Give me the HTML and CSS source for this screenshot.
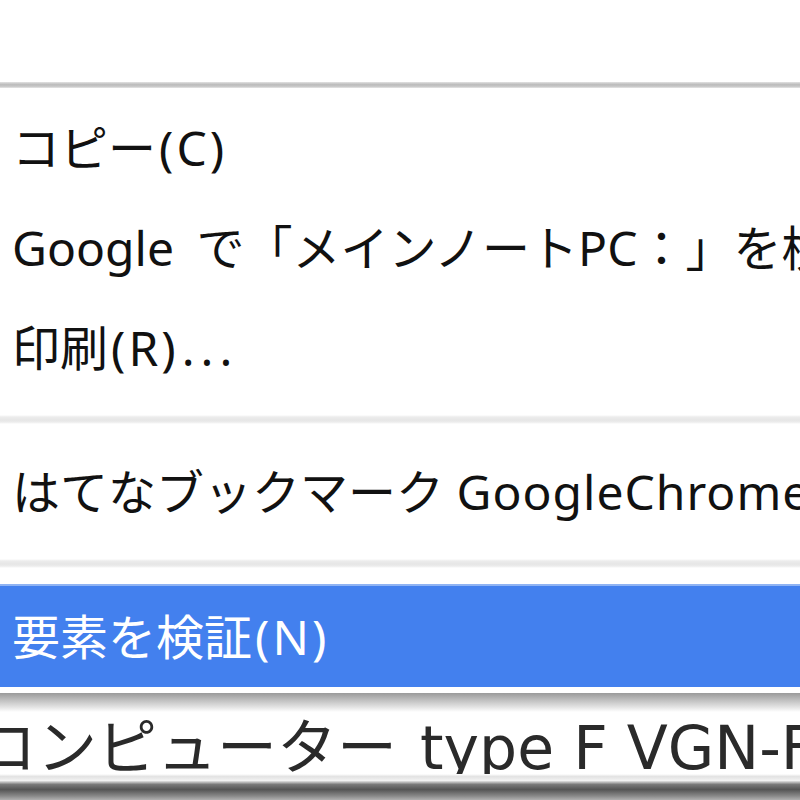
FILE: index.html
```html
<!DOCTYPE html>
<html lang="ja">
<head>
<meta charset="utf-8">
<link rel="stylesheet" href="styles.css">
</head>
<body>
<div class="top-space"></div>
<div class="top-rule"></div>
<div class="menu">
  <div class="item">コピー<span class="acc">(C)</span></div>
  <div class="item"><span class="word">Google</span> で「メインノートPC：」を検索(S)</div>
  <div class="item">印刷<span class="acc">(R)</span><span class="dots">...</span></div>
  <div class="sep"></div>
  <div class="item">はてなブックマーク <span class="wide">GoogleChrome</span> 拡張</div>
  <div class="sep"></div>
  <div class="item active">要素を検証<span class="acc">(N)</span></div>
</div>
<div class="menu-shadow"></div>
<div class="page-row"><span class="kana">コンピューター</span> type F VGN-FE</div>
<div class="page-rule"></div>
</body>
</html>
```
FILE: styles.css
```css
html, body {
  margin: 0;
  padding: 0;
  background: #ffffff;
  overflow: hidden;
  width: 800px;
  height: 800px;
}
.top-space {
  height: 82px;
  background: #ffffff;
}
.top-rule {
  height: 6px;
  background: linear-gradient(#e2e2e2, #bdbdbd 40%, #c4c4c4 70%, #e6e6e6);
}
.menu {
  padding: 10px 0 6px 0;
  background: #ffffff;
}
.item {
  height: 100px;
  line-height: 100px;
  padding-left: 12px;
  font-family: "Noto Sans", "Noto Sans CJK JP", sans-serif;
  font-size: 48px;
  color: #111111;
  white-space: nowrap;
  overflow: hidden;
}
.acc {
  letter-spacing: 3px;
  padding-left: 3px;
}
.word {
  margin-right: 10px;
}
.dots {
  letter-spacing: 6px;
  padding-left: 3px;
}
.wide {
  letter-spacing: 1px;
}
.item.active {
  height: 101px;
  line-height: 101px;
  background: #4380ee;
  color: #ffffff;
  box-shadow: 0 -2px 0 #8fb3f3;
}
.sep {
  height: 44px;
  background: linear-gradient(#ffffff 0, #ffffff 17px, #ececec 19px, #e6e6e6 22px, #ececec 24px, #ffffff 26px, #ffffff 100%);
}
.menu-shadow {
  height: 19px;
  background: linear-gradient(#9a9a9a, #b8b8b8 30%, #e4e4e4 75%, #ffffff);
}
.page-row {
  height: 62px;
  line-height: 62px;
  text-indent: -23px;
  font-family: "DejaVu Sans", "Noto Sans CJK JP", sans-serif;
  font-size: 60px;
  color: #2a2a2a;
  white-space: nowrap;
  overflow: hidden;
  background: #ffffff;
}
.kana {
  font-family: "Noto Sans CJK JP", sans-serif;
  margin-right: 4px;
}
.page-rule {
  height: 26px;
  background: linear-gradient(#ffffff, #e2e2e2 10%, #f2f2f2 25%, #7a7a7a 40%, #555555 60%, #8a8a8a 85%, #b0b0b0);
}
```
